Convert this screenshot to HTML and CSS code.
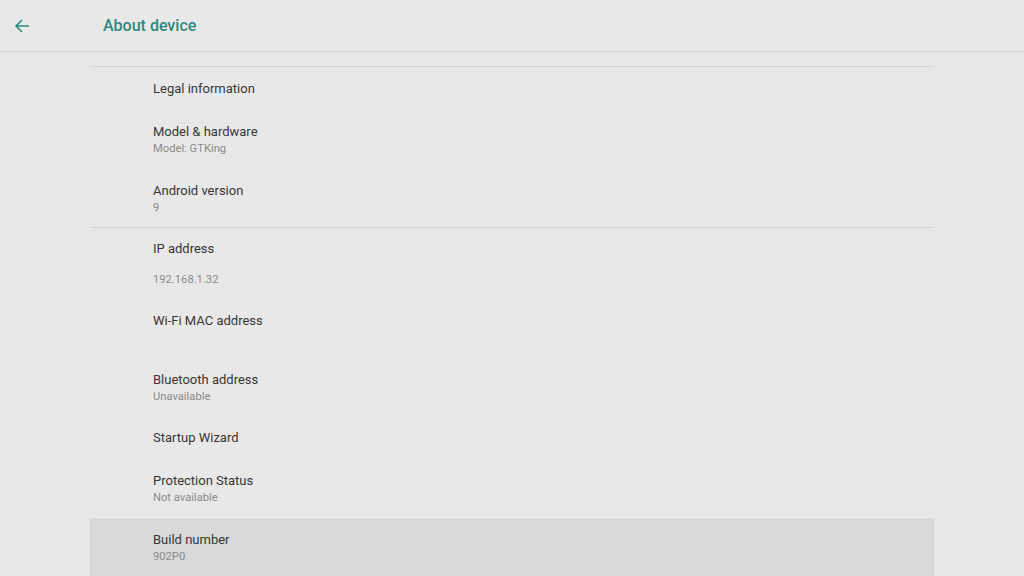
FILE: index.html
```html
<!DOCTYPE html>
<html>
<head>
<meta charset="utf-8">
<link rel="stylesheet" href="styles.css">
</head>
<body>
<header class="appbar">
  <span class="back">
    <svg width="16" height="16" viewBox="0 0 16 16"><path d="M15 8H2.5M8 2L2 8l6 6" fill="none" stroke="#2a8a7c" stroke-width="1.6"/></svg>
  </span>
  <h1 class="title">About device</h1>
</header>
<main class="list">
  <section class="group first">
    <div class="item single"><div class="item-title">Legal information</div></div>
    <div class="item"><div class="item-title">Model &amp; hardware</div><div class="item-sum">Model: GTKing</div></div>
    <div class="item last"><div class="item-title">Android version</div><div class="item-sum">9</div></div>
  </section>
  <section class="group second">
    <div class="item multi"><div class="item-title">IP address</div><div class="item-sum">&nbsp;<br>192.168.1.32</div></div>
    <div class="item"><div class="item-title">Wi-Fi MAC address</div><div class="item-sum">&nbsp;</div></div>
    <div class="item"><div class="item-title">Bluetooth address</div><div class="item-sum">Unavailable</div></div>
    <div class="item single"><div class="item-title">Startup Wizard</div></div>
    <div class="item last"><div class="item-title">Protection Status</div><div class="item-sum">Not available</div></div>
  </section>
  <section class="group focused">
    <div class="item"><div class="item-title">Build number</div><div class="item-sum">902P0</div></div>
  </section>
</main>
</body>
</html>
```
FILE: styles.css
```css
html, body {
  margin: 0;
  padding: 0;
  height: 100%;
  overflow: hidden;
}
body {
  background: #e9e8e9;
  font-family: Roboto, "Liberation Sans", sans-serif;
}
.appbar {
  height: 51px;
  display: flex;
  align-items: center;
  border-bottom: 1px solid #d2d2d3;
  box-shadow: 0 1px 2px rgba(0,0,0,0.04);
}
.back {
  width: 16px;
  height: 16px;
  margin-left: 14px;
  display: flex;
}
.title {
  margin: 0 0 0 73px;
  font-size: 16px;
  font-weight: 500;
  color: #2a8a7c;
}
.list {
  margin: 14px 0 0 90px;
  width: 844px;
}
.group {
  border-top: 1px solid #d3d3d4;
}
.group.second {
  padding-top: 1px;
}
.group.focused {
  background: #d9d9da;
  border-top-color: #f2f2f2;
}
.item {
  padding: 10px 0 16px 63px;
}
.item.single {
  padding: 9px 0 13px 63px;
}
.group.first .item.single {
  padding-top: 12px;
  padding-bottom: 13px;
}
.group.first .item.last {
  padding-bottom: 13px;
}
.item.multi {
  padding-bottom: 14px;
}
.item.multi .item-sum {
  line-height: 14px;
}
.group.second .item.last {
  padding-bottom: 13px;
}
.group.focused .item {
  padding-top: 12px;
}
.item-title {
  font-size: 13px;
  line-height: 20px;
  color: #363636;
}
.item-sum {
  font-size: 11.2px;
  line-height: 13px;
  color: #8a8a8a;
}
```
